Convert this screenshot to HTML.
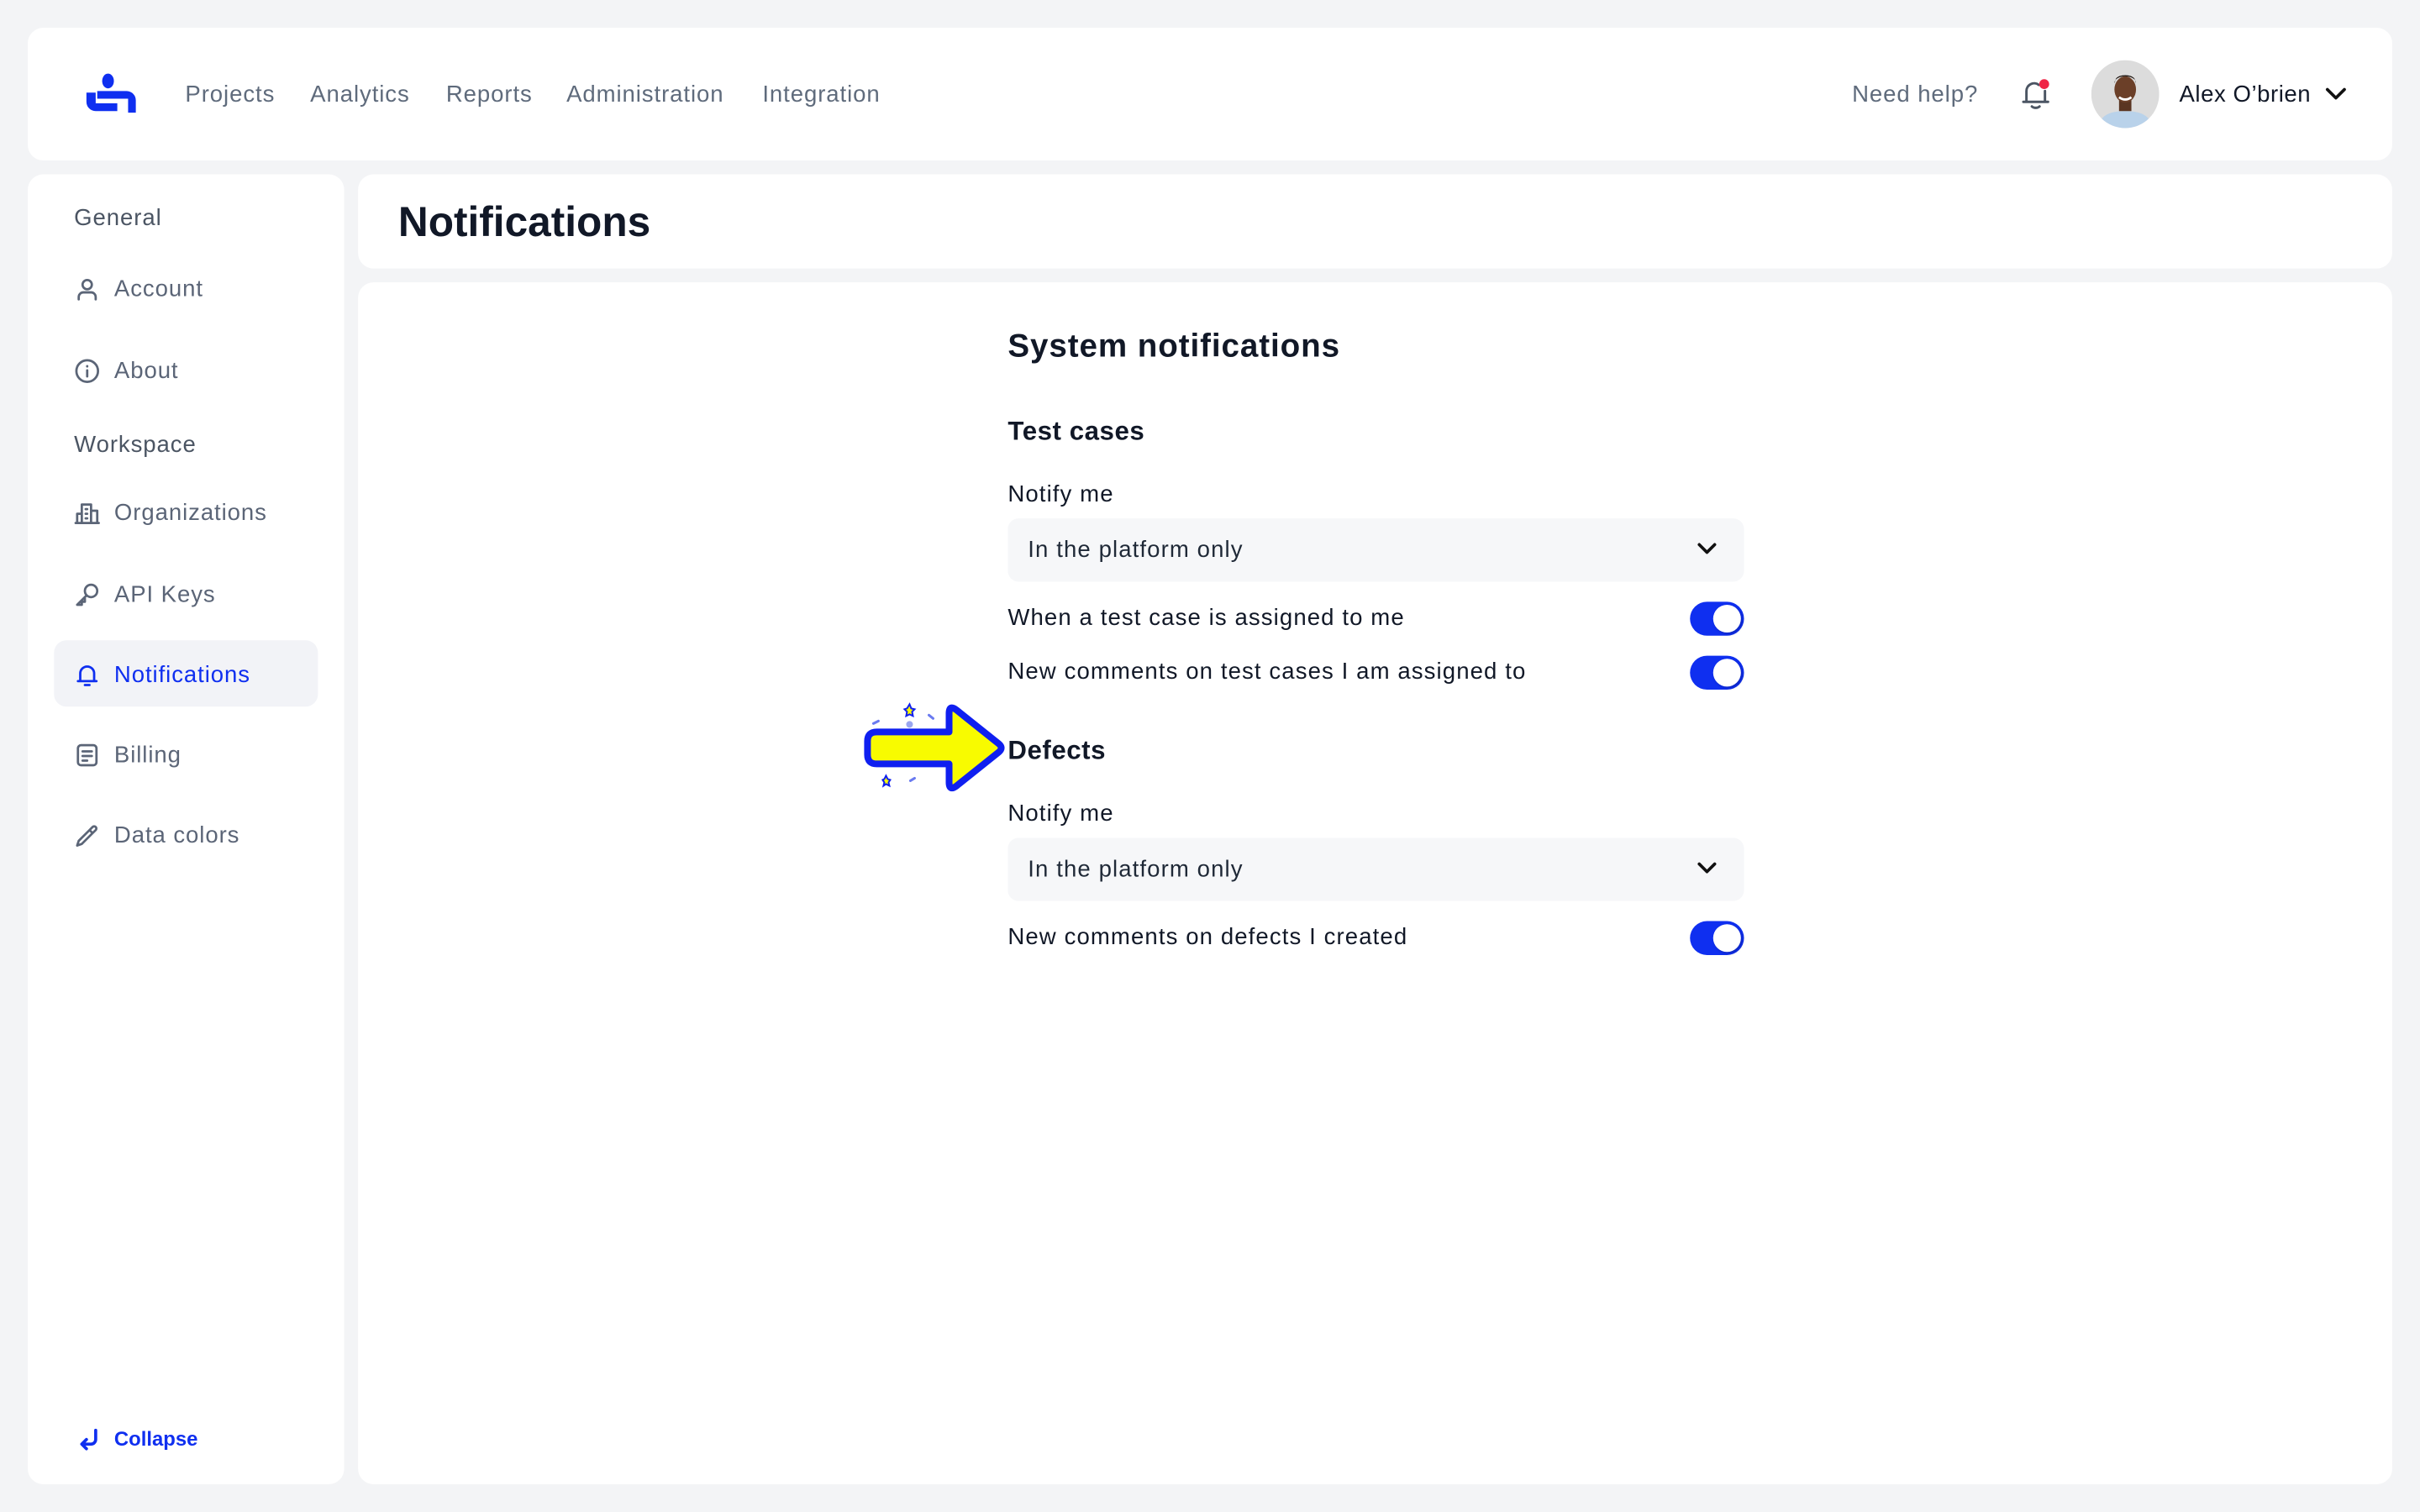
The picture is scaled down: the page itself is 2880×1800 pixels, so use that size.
<!DOCTYPE html>
<html><head><meta charset="utf-8"><style>
html,body{margin:0;padding:0;width:2880px;height:1800px;overflow:hidden;background:#f3f4f6;font-family:"Liberation Sans",sans-serif}
#w{position:absolute;left:0;top:0;width:1568px;height:980px;transform:scale(1.836735);transform-origin:0 0}
.a{position:absolute}
.card{position:absolute;background:#fff;border-radius:10px}
.nav{position:absolute;top:53px;font-size:15px;color:#5f6b7c;white-space:nowrap;letter-spacing:.5px}
.si{position:absolute;left:48px;font-size:15px;color:#5b6577;white-space:nowrap;display:flex;align-items:center;letter-spacing:.5px}
.si svg{width:17px;height:17px;margin-right:9px;fill:none;stroke:#5b6577;stroke-width:1.5;stroke-linecap:round;stroke-linejoin:round}
.t{position:absolute;left:653px;color:#111827;white-space:nowrap;letter-spacing:.6px}
.sel{position:absolute;left:653px;width:477px;height:41px;background:#f6f7f9;border-radius:7px}
.sel span{position:absolute;left:13px;top:12px;font-size:15px;color:#1f2937;letter-spacing:.6px}
.sel svg{position:absolute;right:17px;top:15px}
.tg{position:absolute;left:1095px;width:35px;height:22px;background:#0f2ff0;border-radius:11px}
.tg:after{content:"";position:absolute;right:2px;top:2px;width:18px;height:18px;border-radius:50%;background:#fff;box-shadow:1px 1px 2px rgba(0,0,0,.2)}
</style></head><body><div id="w">
<div class="card" style="left:18px;top:18px;width:1532px;height:86px"></div>
<svg class="a" style="left:53px;top:47px" width="36" height="28" viewBox="0 0 36 28"><ellipse cx="17" cy="5.5" rx="3.8" ry="4.8" fill="#0f2ff0"/><path d="M3 13v6a6 6 0 0 0 6 6h14v-5H9v-7z" fill="#0f2ff0"/><path d="M10 12h19a6 6 0 0 1 6 6v8h-5v-9H10z" fill="#0f2ff0"/></svg>
<div class="nav" style="left:120px">Projects</div>
<div class="nav" style="left:201px">Analytics</div>
<div class="nav" style="left:289px">Reports</div>
<div class="nav" style="left:367px">Administration</div>
<div class="nav" style="left:494px">Integration</div>
<div class="nav" style="left:1200px">Need help?</div>
<svg class="a" style="left:1308px;top:50px" width="22" height="22" viewBox="0 0 22 22" fill="none" stroke="#4b5563" stroke-width="1.6" stroke-linecap="round"><path d="M5 15V9a5 5 0 0 1 8-4M17 9v6M3 16h16M8.5 19a3 2 0 0 0 5 0"/><circle cx="16.5" cy="4.5" r="3.2" fill="#ef2545" stroke="none"/></svg>
<svg class="a" style="left:1355px;top:39px" width="44" height="44" viewBox="0 0 44 44"><defs><clipPath id="c"><circle cx="22" cy="22" r="22"/></clipPath></defs><g clip-path="url(#c)"><rect width="44" height="44" fill="#dcdcdc"/><path d="M4 44c2-9 9-11 18-11s16 2 18 11z" fill="#b9d2ea"/><rect x="18" y="24" width="8" height="9" fill="#5a3522"/><ellipse cx="22" cy="19" rx="7" ry="8.5" fill="#6b3f28"/><path d="M15 15c0-6 14-6 14 0l-1-3c-2-3-10-3-12 0z" fill="#1b120d"/><path d="M18 24q4 3 8 0" stroke="#fff" stroke-width="1.5" fill="none"/></g></svg>
<div class="nav" style="left:1412px;color:#111827;letter-spacing:.3px">Alex O’brien</div>
<svg class="a" style="left:1506px;top:56px" width="15" height="10" viewBox="0 0 15 10" fill="none" stroke="#111" stroke-width="2" stroke-linecap="round" stroke-linejoin="round"><path d="M2 2l5.5 5.5L13 2"/></svg>

<div class="card" style="left:18px;top:113px;width:205px;height:849px"></div>
<div class="si" style="top:133px;color:#4b5563">General</div>
<div class="si" style="top:179px;left:48px"><svg viewBox="0 0 17 17"><circle cx="8.5" cy="5.5" r="3"/><path d="M3 15v-1.5a3 3 0 0 1 3-3h5a3 3 0 0 1 3 3V15"/></svg>Account</div>
<div class="si" style="top:232px"><svg viewBox="0 0 17 17"><circle cx="8.5" cy="8.5" r="7"/><path d="M8.5 8v4M8.5 5.3v.2"/></svg>About</div>
<div class="si" style="top:280px;color:#4b5563">Workspace</div>
<div class="si" style="top:324px"><svg viewBox="0 0 17 17"><path d="M1 15h15M2 15V9h3M5 15V3h6v12M11 7h4v8M7.5 6h1M7.5 9h1M7.5 12h1"/></svg>Organizations</div>
<div class="si" style="top:377px"><svg viewBox="0 0 17 17"><circle cx="11" cy="6" r="4"/><path d="M8 9l-6 6h3v-2h2v-2"/></svg>API Keys</div>
<div class="a" style="left:35px;top:415px;width:171px;height:43px;background:#f2f3f7;border-radius:8px"></div>
<div class="si" style="top:429px;color:#0f2ff0"><svg viewBox="0 0 17 17" style="stroke:#0f2ff0"><path d="M4 12V7.5a4.5 4.5 0 0 1 9 0V12M2.5 12.5h12M7 15h3"/></svg>Notifications</div>
<div class="si" style="top:481px"><svg viewBox="0 0 17 17"><rect x="2.5" y="2" width="12" height="13" rx="2"/><path d="M5.5 6h6M5.5 9h6M5.5 12h3"/></svg>Billing</div>
<div class="si" style="top:533px"><svg viewBox="0 0 17 17"><path d="M2 15l1-3 7-7 2 2-7 7zM10 5l2-2a1.4 1.4 0 0 1 2 2l-2 2"/></svg>Data colors</div>
<svg class="a" style="left:50px;top:925px" width="16" height="16" viewBox="0 0 16 16" fill="none" stroke="#0f2ff0" stroke-width="2" stroke-linecap="round" stroke-linejoin="round"><path d="M12 2v6a3 3 0 0 1-3 3H3M6 8l-3 3 3 3"/></svg>
<div class="a" style="left:74px;top:925px;font-size:13px;font-weight:bold;color:#0f2ff0">Collapse</div>

<div class="card" style="left:232px;top:113px;width:1318px;height:61px"></div>
<div class="a" style="left:258px;top:129px;font-size:27px;font-weight:bold;color:#111827">Notifications</div>
<div class="card" style="left:232px;top:183px;width:1318px;height:779px"></div>

<div class="t" style="top:213px;font-size:21px;font-weight:bold;letter-spacing:.5px">System notifications</div>
<div class="t" style="top:270px;font-size:17px;font-weight:bold;letter-spacing:.3px">Test cases</div>
<div class="t" style="top:312px;font-size:15px">Notify me</div>
<div class="sel" style="top:336px"><span>In the platform only</span><svg width="14" height="10" viewBox="0 0 14 10" fill="none" stroke="#111" stroke-width="2" stroke-linecap="round" stroke-linejoin="round"><path d="M2 2l5 5 5-5"/></svg></div>
<div class="t" style="top:392px;font-size:15px">When a test case is assigned to me</div>
<div class="tg" style="top:390px"></div>
<div class="t" style="top:427px;font-size:15px">New comments on test cases I am assigned to</div>
<div class="tg" style="top:425px"></div>
<div class="t" style="top:477px;font-size:17px;font-weight:bold;letter-spacing:.3px">Defects</div>
<div class="t" style="top:519px;font-size:15px">Notify me</div>
<div class="sel" style="top:543px"><span>In the platform only</span><svg width="14" height="10" viewBox="0 0 14 10" fill="none" stroke="#111" stroke-width="2" stroke-linecap="round" stroke-linejoin="round"><path d="M2 2l5 5 5-5"/></svg></div>
<div class="t" style="top:599px;font-size:15px">New comments on defects I created</div>
<div class="tg" style="top:597px"></div>

<svg class="a" style="left:555px;top:446px;overflow:visible" width="109" height="71" viewBox="1020 820 200 130"><path d="M1044 872h86v-22q0-11 9-4l50 40q6 5 0 10l-50 40q-9 7-9-4v-22h-86q-11 0-11-11v-16q0-11 11-11z" fill="#f8fb00" stroke="#0f1ff0" stroke-width="8" stroke-linejoin="round"/><circle cx="1083" cy="863" r="4" fill="#9aa6f0"/><path d="M1040 862l6-3M1106 852l5 4M1084 930l5-3" stroke="#6a7af0" stroke-width="3" stroke-linecap="round"/><path d="M1080 844l3-5 2 5 4 1-3 3 1 5-4-2-4 2 1-5-3-3z" fill="#f8fb00" stroke="#0f1ff0" stroke-width="2"/><path d="M1053 928l2-4 2 4 3 1-2 3 1 4-4-2-3 2 1-4-2-3z" fill="#f8fb00" stroke="#0f1ff0" stroke-width="2"/></svg>
</div></body></html>
